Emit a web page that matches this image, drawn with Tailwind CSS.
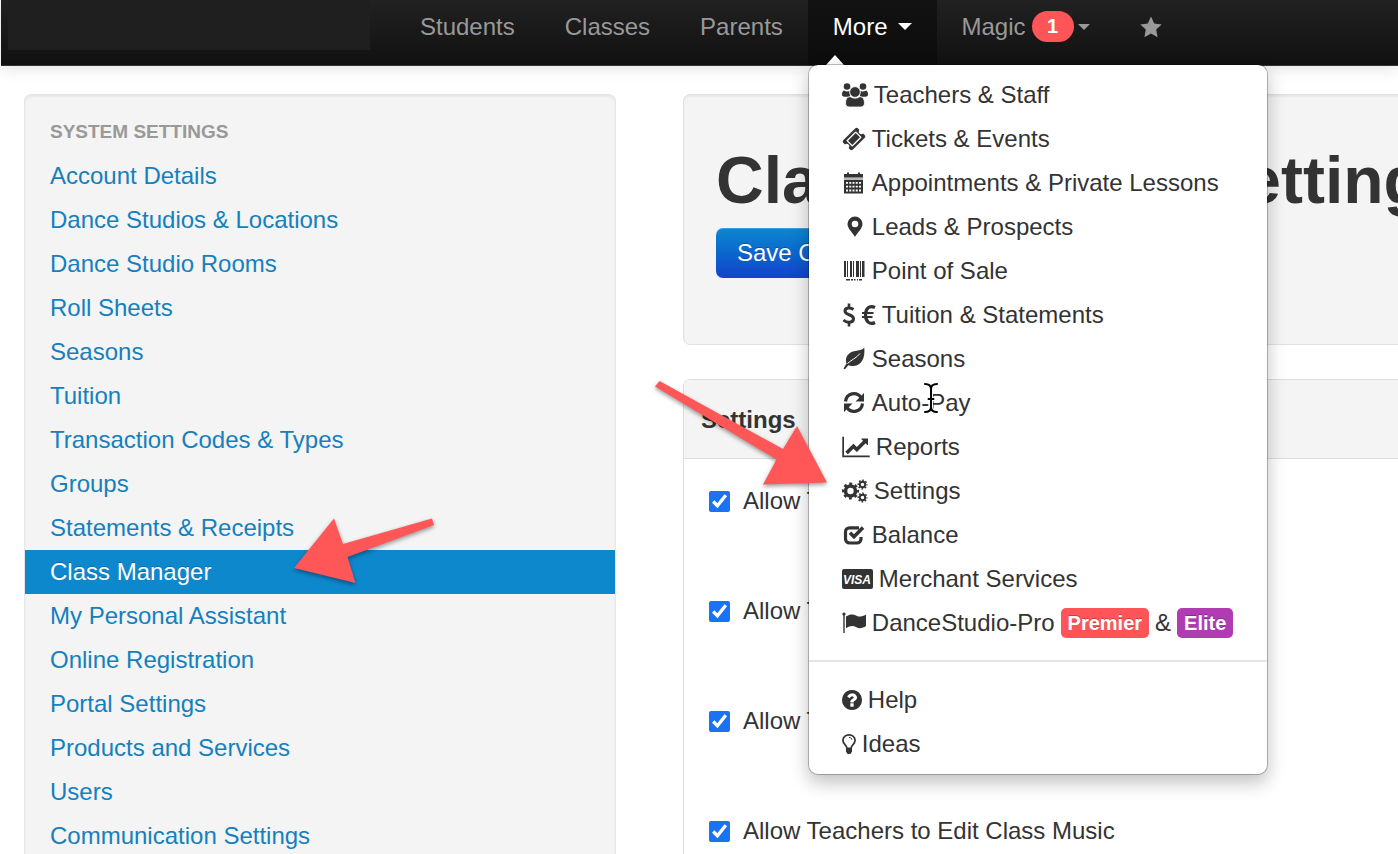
<!DOCTYPE html>
<html lang="en">
<head>
<meta charset="utf-8">
<title>Class Manager Settings</title>
<script src="https://cdn.jsdelivr.net/npm/@tailwindcss/browser@4"></script>
</head>
<body class="bg-white overflow-x-hidden text-[24px] leading-[44px] text-[#333] font-['Helvetica_Neue','Liberation_Sans',Arial,sans-serif]">
<div class="relative h-screen overflow-hidden">

<header class="relative z-20 ml-px h-[66px] flex border-b border-[#333] bg-linear-to-b from-[#212121] to-[#111] shadow-[0_2px_16px_rgba(0,0,0,0.12)]">
  <div class="ml-[7px] w-[362px] h-[50px] bg-[#1f1f1f]"></div>
  <nav class="ml-[25px] text-[#999] leading-[53px]">
    <ul class="flex h-[65px]">
      <li class="px-[25px]"><a href="#">Students</a></li>
      <li class="px-[25px]"><a href="#">Classes</a></li>
      <li class="px-[25px]"><a href="#">Parents</a></li>
      <li class="relative px-[25px] bg-linear-to-b from-[#121212] to-[#0c0c0c] text-white">
        <button class="flex items-center gap-2.5">More
          <svg class="w-3.5 h-[7px]" viewBox="0 0 14 7" fill="currentColor"><path d="M0 0h14L7 7z"/></svg>
        </button>
        <svg class="absolute left-[18px] top-[55px] w-[18px] h-2.5" viewBox="0 0 18 10" fill="#fff"><path d="M0 10L9 0l9 10z"/></svg>

        <div class="absolute left-0 top-[64px] w-[460px] py-2 rounded-[10px] border border-black/25 bg-white bg-clip-padding text-[#333] leading-[44px] shadow-[0_8px_18px_rgba(0,0,0,0.24)]">
          <ul>
            <li><a href="#" class="flex items-center gap-1.5 h-11 pl-[33px] whitespace-nowrap">
              <svg class="w-[26px] h-6" viewBox="0 0 26 24" fill="currentColor"><circle cx="5" cy="3.500" r="3.300"/><circle cx="21" cy="3.500" r="3.300"/><path d="M2 7.500c2 1.300 4 1.300 6 .2v6H2.500C.8 13.700 0 12.800 0 11.500c0-2 .6-3.500 2-4zM24 7.500c-2 1.300-4 1.300-6 .2v6h5.500c1.700 0 2.500-.9 2.500-2.200 0-2-.6-3.500-2-4z"/><path d="M8 13.500c3 2.200 7 2.200 10 0 3 .3 4.500 3 4.500 6.500 0 2.500-1.500 4-4 4h-11c-2.500 0-4-1.500-4-4 0-3.500 1.500-6.200 4.500-6.500z" stroke="#fff" stroke-width=".8"/><circle cx="13" cy="9" r="5.400" stroke="#fff" stroke-width=".9"/></svg>Teachers &amp; Staff</a></li>
            <li><a href="#" class="flex items-center gap-1.5 h-11 pl-[33px] whitespace-nowrap">
              <svg class="w-6 h-6" viewBox="0 0 1792 1792" fill="currentColor"><path d="M1024 452l316 316-572 572-316-316zm-211 979l618-618q19-19 19-45t-19-45l-362-362q-18-18-45-18t-45 18l-618 618q-19 19-19 45t19 45l362 362q18 18 45 18t45-18zm889-637l-907 908q-37 37-90.500 37t-90.500-37l-126-126q56-56 56-136t-56-136-136-56-136 56l-125-126q-37-37-37-90.500t37-90.500l907-906q37-37 90.500-37t90.500 37l125 125q-56 56-56 136t56 136 136 56 136-56l126 125q37 37 37 90.500t-37 90.500z"/></svg>Tickets &amp; Events</a></li>
            <li><a href="#" class="flex items-center gap-1.5 h-11 pl-[33px] whitespace-nowrap">
              <svg class="w-6 h-6" viewBox="0 0 24 24" fill="currentColor"><path d="M2 3h3V1.500h2V3h9V1.500h2V3h3v3.500H2z"/><path d="M2 6.500h19v2.500H2z" opacity=".35"/><path fill-rule="evenodd" d="M2 9h19v13.500H2zM4 11v1.800h2V11zm3.250 0v1.800h2V11zm3.250 0v1.800h2V11zm3.250 0v1.800h2V11zM17 11v1.800h2V11zM4 14.800v1.800h2v-1.800zm3.250 0v1.800h2v-1.800zm3.250 0v1.800h2v-1.800zm3.250 0v1.800h2v-1.800zm3.250 0v1.800h2v-1.800zM4 18.600v1.800h2v-1.800zm3.250 0v1.800h2v-1.800zm3.250 0v1.800h2v-1.800zm3.250 0v1.800h2v-1.800zm3.250 0v1.800h2v-1.800z"/></svg>Appointments &amp; Private Lessons</a></li>
            <li><a href="#" class="flex items-center gap-1.5 h-11 pl-[33px] whitespace-nowrap">
              <svg class="w-6 h-6" viewBox="0 0 24 24" fill="currentColor"><path fill-rule="evenodd" d="M13 1.500a7.500 7.500 0 0 1 7.500 7.500c0 4.500-5 8.500-7.500 13C10.500 17.500 5.500 13.500 5.500 9A7.500 7.500 0 0 1 13 1.500zm0 4.200a3.300 3.300 0 1 0 0 6.600 3.300 3.300 0 0 0 0-6.600z"/></svg>Leads &amp; Prospects</a></li>
            <li><a href="#" class="flex items-center gap-1.5 h-11 pl-[33px] whitespace-nowrap">
              <svg class="w-6 h-6" viewBox="0 0 24 24" fill="currentColor"><path d="M2 2h2v16H2zm3 0h1v16H5zm3 0h2v16H8zm3 0h1v16h-1zm3 0h3v16h-3zm4 0h1v16h-1zm2 0h2.500v16H20zM4 20h4v1.500H4zm5 0h2v1.500H9zm3 0h1.500v1.500H12zm3 0h1v1.500h-1zm2 0h3v1.500h-3z"/></svg>Point of Sale</a></li>
            <li><a href="#" class="flex items-center gap-1.5 h-11 pl-[33px] whitespace-nowrap">
              <svg class="w-[34px] h-6" viewBox="0 0 34 24" fill="none" stroke="currentColor"><path d="M11.500 6.500C8.500 4.300 3 4.300 3 8c0 4.500 8.500 3 8.500 7.800 0 4.200-6.500 4.500-10 1.200" stroke-width="3"/><path d="M7 .5V5M7 18.500v5" stroke-width="2.600"/><path d="M33 4.500C27 1.500 23.500 6 23.500 12s4 10.500 9.500 7.500" stroke-width="3.200"/><path d="M20 10h11.500M20 14h10.500" stroke-width="2.200"/></svg>Tuition &amp; Statements</a></li>
            <li><a href="#" class="flex items-center gap-1.5 h-11 pl-[33px] whitespace-nowrap">
              <svg class="w-6 h-6" viewBox="0 0 24 24" fill="currentColor"><path d="M22.300.8c1 9.700-2.300 17.700-10.800 18.200-2.200.2-4-.2-5.200-.8L3 22.300l-1.500-.8 3-5C2 9.500 7.500 4.800 13 4c4-.6 7-.7 9.300-3.200z"/><path d="M5.500 16.500C9 13 14 11.500 18 6.500" fill="none" stroke="#fff" stroke-width="1"/></svg>Seasons</a></li>
            <li><a href="#" class="flex items-center gap-1.5 h-11 pl-[33px] whitespace-nowrap">
              <svg class="w-6 h-6" viewBox="0 0 24 24" fill="none" stroke="currentColor" stroke-width="3.200"><path d="M3.500 10.500C4.500 2 14.500 0 19 6.500M20.500 12.500c-1 8.500-11 10.500-15.500 4"/><path d="M22 2v8.500h-8.500zM2 21v-8.500h8.500z" fill="currentColor" stroke="none"/></svg>Auto-Pay</a></li>
            <li><a href="#" class="flex items-center gap-1.5 h-11 pl-[33px] whitespace-nowrap">
              <svg class="w-7 h-6" viewBox="0 0 2048 1792" fill="currentColor"><path d="M2048 1536v128h-2048v-1536h128v1408h1920zm-128-1248v435q0 21-19.500 29.500t-35.500-7.500l-121-121-633 633q-10 10-23 10t-23-10l-233-233-416 416-192-192 585-585q10-10 23-10t23 10l233 233 464-464-121-121q-16-16-7.500-35.500t29.500-19.500h435q14 0 23 9t9 23z"/></svg>Reports</a></li>
            <li><a href="#" class="flex items-center gap-1.5 h-11 pl-[33px] whitespace-nowrap">
              <svg class="w-[26px] h-6" viewBox="0 0 26 24" fill="none" stroke="currentColor"><circle cx="8.500" cy="12" r="5" stroke-width="3.600"/><circle cx="8.500" cy="12" r="7.300" stroke-width="2.400" stroke-dasharray="2.900 2.833" stroke-dashoffset="1.450"/><circle cx="20.500" cy="5.500" r="2.700" stroke-width="1.900"/><circle cx="20.500" cy="5.500" r="4.300" stroke-width="1.500" stroke-dasharray="1.700 1.677" stroke-dashoffset=".85"/><circle cx="20.500" cy="18.500" r="2.700" stroke-width="1.900"/><circle cx="20.500" cy="18.500" r="4.300" stroke-width="1.500" stroke-dasharray="1.700 1.677" stroke-dashoffset=".85"/></svg>Settings</a></li>
            <li><a href="#" class="flex items-center gap-1.5 h-11 pl-[33px] whitespace-nowrap">
              <svg class="w-6 h-6" viewBox="0 0 24 24" fill="none" stroke="currentColor" stroke-width="3.200"><path d="M17 4.800H7.500a4 4 0 0 0-4 4V16a4 4 0 0 0 4 4H15a4 4 0 0 0 4-4v-2"/><path d="M8 9.800l4 4 9-9.300" stroke-width="3.600"/></svg>Balance</a></li>
            <li><a href="#" class="flex items-center gap-1.5 h-11 pl-[33px] whitespace-nowrap">
              <svg class="w-[31px] h-6" viewBox="0 0 31 24"><rect y="2" width="31" height="20" rx="2" fill="currentColor"/><text x="15" y="16.500" text-anchor="middle" font-size="12" font-weight="bold" font-style="italic" fill="#fff">VISA</text></svg>Merchant Services</a></li>
            <li><a href="#" class="flex items-center gap-1.5 h-11 pl-[33px] whitespace-nowrap">
              <svg class="w-6 h-6" viewBox="0 0 24 24" fill="currentColor"><circle cx="2" cy="3" r="1.600"/><path d="M1.300 3h1.400v19H1.300zM4 5.500c4-2.700 7-2.600 10.500-.7 3 1.600 6 .7 9.500-1.300v11.500c-3 2-6.500 3-9.500 1.300-3.500-1.800-6.500-1.600-10.500.9z"/></svg><span>DanceStudio-Pro</span>
              <span class="px-[7px] rounded-[5px] bg-[#ff5558] text-white text-[20px] leading-[30px] font-bold [text-shadow:0_-1px_0_rgba(0,0,0,0.25)]">Premier</span><span>&amp;</span><span class="px-[7px] rounded-[5px] bg-[#b03bb3] text-white text-[20px] leading-[30px] font-bold [text-shadow:0_-1px_0_rgba(0,0,0,0.25)]">Elite</span></a></li>
          </ul>
          <hr class="mt-[15px] mb-4 border-0 h-0.5 bg-[#e5e5e5]">
          <ul>
            <li><a href="#" class="flex items-center gap-1.5 h-11 pl-[33px] whitespace-nowrap">
              <svg class="w-5 h-6" viewBox="128 0 1536 1792" fill="currentColor"><path d="M1024 1376v-192q0-14-9-23t-23-9h-192q-14 0-23 9t-9 23v192q0 14 9 23t23 9h192q14 0 23-9t9-23zm256-672q0-88-55.500-163t-138.500-116-170-41q-243 0-371 213-15 24 8 42l132 100q7 6 19 6 16 0 25-12 53-68 86-92 34-24 86-24 48 0 85.500 26t37.500 59q0 38-20 61t-68 45q-63 28-115.500 86.500t-52.500 125.500v36q0 14 9 23t23 9h192q14 0 23-9t9-23q0-19 21.500-49.500t54.500-49.500q32-18 49-28.500t46-35 44.500-48 28-60.500 12.500-81zm384 192q0 209-103 385.500t-279.500 279.500-385.500 103-385.500-103-279.500-279.500-103-385.500 103-385.500 279.500-279.500 385.500-103 385.500 103 279.500 279.500 103 385.500z"/></svg>Help</a></li>
            <li><a href="#" class="flex items-center gap-1.5 h-11 pl-[33px] whitespace-nowrap">
              <svg class="w-3.5 h-6" viewBox="0 0 14 24" fill="none" stroke="currentColor" stroke-width="1.700"><path d="M4.800 16c0-3-3.900-4-3.900-7.500A6 5.800 0 0 1 7 2.800a6 5.800 0 0 1 6.100 5.700c0 3.500-3.900 4.500-3.900 7.500"/><path d="M7 5.500c1.800 0 3 1 3 2.300" stroke-width="1"/><path d="M4 15.500h6v4L8.500 22h-3L4 19.500z" fill="currentColor" stroke="none"/></svg>Ideas</a></li>
          </ul>
        </div>
      </li>
      <li class="px-[25px]"><button class="flex items-center">Magic
        <span class="ml-1.5 w-[42px] h-[31px] rounded-full bg-[#ff5558] text-white text-[20px] leading-[31px] font-bold">1</span>
        <svg class="ml-1 w-3 h-1.5" viewBox="0 0 12 6" fill="currentColor"><path d="M0 0h12L6 6z"/></svg></button></li>
      <li class="px-[25px]"><a href="#" aria-label="Favorites" class="flex items-center h-[53px]">
        <svg class="w-[22px] h-[22px]" viewBox="0 0 22 22" fill="currentColor"><path d="M11 .5l3.200 7 7.500.9-5.500 5.200 1.400 7.600L11 17.500l-6.600 3.700 1.400-7.600L.3 8.400l7.500-.9z"/></svg></a></li>
    </ul>
  </nav>
</header>

<div class="flex items-start pt-7 pl-6">
  <aside class="w-[592px] shrink-0 pt-[15px] pb-8 border border-[#e5e5e5] rounded-[7px] bg-[#f4f4f4] shadow-[inset_0_2px_2px_rgba(0,0,0,0.05)]">
    <h2 class="px-[25px] text-[19px] leading-[44px] font-bold text-[#999]">SYSTEM SETTINGS</h2>
    <ul class="text-[#1580bd]">
      <li><a href="#" class="block px-[25px]">Account Details</a></li>
      <li><a href="#" class="block px-[25px]">Dance Studios &amp; Locations</a></li>
      <li><a href="#" class="block px-[25px]">Dance Studio Rooms</a></li>
      <li><a href="#" class="block px-[25px]">Roll Sheets</a></li>
      <li><a href="#" class="block px-[25px]">Seasons</a></li>
      <li><a href="#" class="block px-[25px]">Tuition</a></li>
      <li><a href="#" class="block px-[25px]">Transaction Codes &amp; Types</a></li>
      <li><a href="#" class="block px-[25px]">Groups</a></li>
      <li><a href="#" class="block px-[25px]">Statements &amp; Receipts</a></li>
      <li><a href="#" class="block px-[25px] bg-[#0e88cd] text-white [text-shadow:0_-1px_0_rgba(0,0,0,0.2)]">Class Manager</a></li>
      <li><a href="#" class="block px-[25px]">My Personal Assistant</a></li>
      <li><a href="#" class="block px-[25px]">Online Registration</a></li>
      <li><a href="#" class="block px-[25px]">Portal Settings</a></li>
      <li><a href="#" class="block px-[25px]">Products and Services</a></li>
      <li><a href="#" class="block px-[25px]">Users</a></li>
      <li><a href="#" class="block px-[25px]">Communication Settings</a></li>
    </ul>
  </aside>

  <main class="ml-[67px] flex-1 min-w-[800px]">
    <section class="px-8 pt-[52px] pb-[66px] border border-[#e1e1e1] rounded-[7px] bg-[#f4f4f4] shadow-[inset_0_2px_2px_rgba(0,0,0,0.05)]">
      <h1 class="text-[66px] leading-[66px] font-bold whitespace-nowrap">Class Manager Settings</h1>
      <button class="block mt-[15px] h-[50px] px-[21px] rounded-[7px] bg-linear-to-b from-[#1187cf] to-[#1740cc] text-white leading-[50px] shadow-[inset_0_1px_0_rgba(255,255,255,0.2)] [text-shadow:0_-1px_0_rgba(0,0,0,0.25)]">Save Changes</button>
    </section>
    <section class="mt-[34px] border border-[#ddd] rounded-[7px] bg-white overflow-hidden">
      <h2 class="h-[79px] px-[17px] border-b border-[#ddd] bg-[#f4f4f4] font-bold leading-[80px]">Settings</h2>
      <div class="h-[110px] pt-5 pl-[25px]"><label class="flex items-center gap-[13px]"><input type="checkbox" checked class="w-[21px] h-[21px] accent-[#1a73f5]">Allow Teachers</label></div>
      <div class="h-[110px] pt-5 pl-[25px]"><label class="flex items-center gap-[13px]"><input type="checkbox" checked class="w-[21px] h-[21px] accent-[#1a73f5]">Allow Teachers</label></div>
      <div class="h-[110px] pt-5 pl-[25px]"><label class="flex items-center gap-[13px]"><input type="checkbox" checked class="w-[21px] h-[21px] accent-[#1a73f5]">Allow Teachers</label></div>
      <div class="h-[110px] pt-5 pl-[25px]"><label class="flex items-center gap-[13px]"><input type="checkbox" checked class="w-[21px] h-[21px] accent-[#1a73f5]">Allow Teachers to Edit Class Music</label></div>
    </section>
  </main>
</div>

<!-- Callout arrows and text cursor drawn above the page -->
<svg class="absolute left-0 top-0 z-30 w-[1398px] h-[854px] pointer-events-none" viewBox="0 0 1398 854">
  <g fill="#ff5757" class="drop-shadow-[0_2px_2px_rgba(0,0,0,0.4)]">
    <path d="M659.500 381L783 449l14-23 30 56.500-64 2 13.500-25L655 386.500z"/>
    <path d="M294 568l40-49.500 9 25.500 89-25.500 2 6.500-86.500 32 8 26z"/>
  </g>
  <g fill="none" stroke-linecap="round">
    <path d="M925 384c4 0 6 2 6 5v18c0 3-2 5-6 5M937 384c-4 0-6 2-6 5v18c0 3 2 5 6 5M928.500 399h5" stroke="#fff" stroke-width="4"/>
    <path d="M925 384c4 0 6 2 6 5v18c0 3-2 5-6 5M937 384c-4 0-6 2-6 5v18c0 3 2 5 6 5M928.500 399h5" stroke="#000" stroke-width="2"/>
  </g>
</svg>
</div>
</body>
</html>
